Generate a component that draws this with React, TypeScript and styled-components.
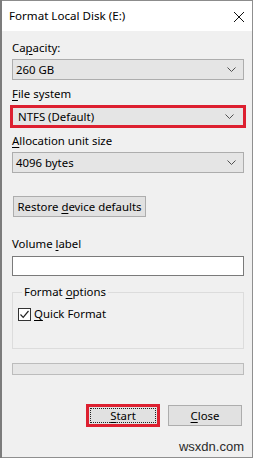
import React from "react";
import styled, { createGlobalStyle } from "styled-components";

const GlobalStyle = createGlobalStyle`
    html, body {
        margin: 0;
        padding: 0;
        background: #7c7c7c;
    }
    body {
        font-family: "Noto Sans", "Open Sans", sans-serif;
        font-size: 11.4px;
        color: #000;
    }
`;

const Window = styled.div`
    box-sizing: border-box;
    width: 251px;
    height: 458px;
    margin-left: 2px;
    background: #f0f0f0;
    border-top: 1px solid #8c8c8c;
    border-right: 1px solid #8f8f8f;
    border-bottom: 1px solid #8f8f8f;
    display: flex;
    flex-direction: column;
`;

const TitleBar = styled.div`
    height: 30px;
    background: #fff;
    display: flex;
    align-items: center;
    justify-content: space-between;
    padding: 0 8px 0 7px;
`;

const Title = styled.span`
    font-size: 11.6px;
    line-height: 16px;
    margin-top: -1px;
`;

const CloseGlyph = styled.svg`
    width: 10px;
    height: 10px;
    margin-top: 1px;
`;

const Body = styled.div`
    flex: 1;
    display: flex;
    flex-direction: column;
    padding: 9px 8px 0 10px;
`;

const Label = styled.label<{ $top?: number }>`
    display: block;
    height: 16px;
    line-height: 16px;
    margin-top: ${(p) => p.$top ?? 0}px;
    margin-bottom: 3px;
`;

const Key = styled.span`
    text-decoration: underline;
    text-decoration-thickness: 1px;
    text-underline-offset: 2px;
`;

const Select = styled.div<{ $marked?: boolean }>`
    box-sizing: border-box;
    height: ${(p) => (p.$marked ? 23 : 21)}px;
    margin: ${(p) => (p.$marked ? "0 -2px -1px" : "0")};
    padding: 0 ${(p) => (p.$marked ? 9 : 7)}px 0 ${(p) => (p.$marked ? 5 : 3)}px;
    background: #e5e5e5;
    border: ${(p) => (p.$marked ? "3px solid #dd2030" : "1px solid #adadad")};
    display: flex;
    align-items: center;
    justify-content: space-between;
    line-height: 16px;
`;

const Chevron = styled.svg`
    width: 9px;
    height: 5px;
`;

const Button = styled.div<{ $width: number }>`
    box-sizing: border-box;
    width: ${(p) => p.$width}px;
    height: 21px;
    background: #e1e1e1;
    border: 1px solid #adadad;
    display: flex;
    align-items: center;
    justify-content: center;
    line-height: 16px;
`;

const RestoreButton = styled(Button)`
    margin: 23px 0 0 1px;
`;

const StartButton = styled(Button)`
    height: 23px;
    border: 3px solid #dd2030;
    padding: 1px;
`;

const FocusRing = styled.span`
    box-sizing: border-box;
    flex: 1;
    align-self: stretch;
    border: 1px dotted #222;
    display: flex;
    align-items: center;
    justify-content: center;
`;

const TextBox = styled.div`
    box-sizing: border-box;
    height: 20px;
    margin-top: 1px;
    background: #fff;
    border: 1px solid #7a7a7a;
`;

const Group = styled.fieldset`
    margin: 8px 0 0;
    padding: 0 6px 26px 5px;
    border: 1px solid #dcdcdc;
    min-width: 0;
`;

const Legend = styled.legend`
    padding: 0 2px;
    margin-left: 4px;
    line-height: 16px;
`;

const CheckRow = styled.div`
    display: flex;
    align-items: center;
    gap: 3px;
    height: 16px;
    margin-top: 6px;
    line-height: 16px;
`;

const CheckBox = styled.span`
    box-sizing: border-box;
    width: 13px;
    height: 13px;
    background: #fff;
    border: 1px solid #333;
    display: flex;
    align-items: center;
    justify-content: center;
`;

const Progress = styled.div`
    box-sizing: border-box;
    height: 12px;
    margin-top: 14px;
    background: #e6e6e6;
    border: 1px solid #bcbcbc;
`;

const ButtonRow = styled.div`
    display: flex;
    justify-content: flex-end;
    align-items: center;
    gap: 8px;
    margin: 29px 2px 0 0;
`;

const Watermark = styled.div`
    margin-top: 12px;
    text-align: right;
    font-family: "Liberation Sans", Arial, sans-serif;
    font-size: 13px;
    line-height: 16px;
    color: #2a2a2a;
`;

const Dropdown = ({ value, marked }: { value: string; marked?: boolean }) => (
    <Select $marked={marked}>
        <span>{value}</span>
        <Chevron viewBox="0 0 9 5">
            <path d="M0.5 0.5 L4.5 4.5 L8.5 0.5" fill="none" stroke="#505050" strokeWidth="1" />
        </Chevron>
    </Select>
);

export default function App() {
    return (
        <>
            <GlobalStyle />
            <Window>
                <TitleBar>
                    <Title>Format Local Disk (E:)</Title>
                    <CloseGlyph viewBox="0 0 10 10">
                        <path d="M0 0 L10 10 M10 0 L0 10" stroke="#111" strokeWidth="1" />
                    </CloseGlyph>
                </TitleBar>
                <Body>
                    <Label>Ca<Key>p</Key>acity:</Label>
                    <Dropdown value="260 GB" />

                    <Label $top={6}><Key>F</Key>ile system</Label>
                    <Dropdown value="NTFS (Default)" marked />

                    <Label $top={6}><Key>A</Key>llocation unit size</Label>
                    <Dropdown value="4096 bytes" />

                    <RestoreButton $width={133}>
                        <span>Restore <Key>d</Key>evice defaults</span>
                    </RestoreButton>

                    <Label $top={19}>Volume <Key>l</Key>abel</Label>
                    <TextBox />

                    <Group>
                        <Legend>Format <Key>o</Key>ptions</Legend>
                        <CheckRow>
                            <CheckBox>
                                <svg width="11" height="11" viewBox="0 0 11 11">
                                    <path d="M1.5 5.5 L4.2 8.3 L9.5 2" fill="none" stroke="#222" strokeWidth="1.2" />
                                </svg>
                            </CheckBox>
                            <span><Key>Q</Key>uick Format</span>
                        </CheckRow>
                    </Group>

                    <Progress />

                    <ButtonRow>
                        <StartButton $width={74}>
                            <FocusRing><span><Key>S</Key>tart</span></FocusRing>
                        </StartButton>
                        <Button $width={74}><span><Key>C</Key>lose</span></Button>
                    </ButtonRow>

                    <Watermark>wsxdn.com</Watermark>
                </Body>
            </Window>
        </>
    );
}
